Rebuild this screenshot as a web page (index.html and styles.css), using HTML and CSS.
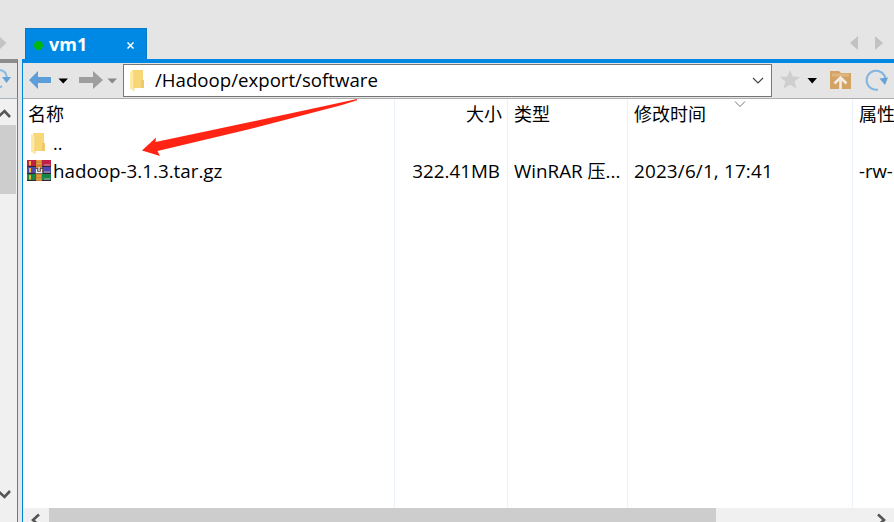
FILE: index.html
```html
<!DOCTYPE html>
<html lang="zh-CN">
<head>
<meta charset="utf-8">
<title>vm1</title>
<link rel="stylesheet" href="styles.css">
</head>
<body>
<svg width="0" height="0" class="defs">
  <symbol id="folder" viewBox="0 0 16 22">
    <path d="M3 0H14V18H5Z" fill="#f7d778"/>
    <path d="M12 10h3v8h-3z" fill="#eecb68"/>
    <path d="M1 1L5 3.5V21L1 18.5Z" fill="#ffe8a3"/>
    <path d="M5 3.5V21" stroke="#e9c766" stroke-width=".6"/>
  </symbol>
</svg>
<div class="app">
  <aside class="side">
    <div class="side-tabs"><svg width="8" height="12" viewBox="0 0 8 12"><path d="M0 0L6.500 6L0 12Z" fill="#c3c3c3"/></svg></div>
    <div class="side-tool"><svg width="12" height="24" viewBox="0 0 12 24"><path d="M0 4Q6.500 5 7 12M0 21.500L2 20" fill="none" stroke="#8ab9df" stroke-width="2"/><path d="M2 11H11L6.500 17Z" fill="#65a3d7"/></svg></div>
    <div class="side-scroll">
      <svg class="s-up" width="12" height="12" viewBox="0 0 12 12"><path d="M-2 9L4.500 3L10 9" fill="none" stroke="#555" stroke-width="2.600"/></svg>
      <div class="s-thumb"></div>
      <svg class="s-down" width="12" height="12" viewBox="0 0 12 12"><path d="M-2 2L4.500 8L10 2" fill="none" stroke="#555" stroke-width="2.600"/></svg>
    </div>
  </aside>
  <main class="main">
    <div class="tabs">
      <div class="tab"><i class="dot"></i><span class="tab-name">vm1</span>
        <svg width="7" height="7" viewBox="0 0 7 7"><path d="M.5.5L6.500 6.500M6.500.5L.5 6.500" stroke="#fff" stroke-width="1.500"/></svg></div>
      <svg class="nav" width="34" height="16" viewBox="0 0 34 16"><path d="M8 1V15L0 8ZM25 1V15L33 8Z" fill="#c2c2c2"/></svg>
    </div>
    <div class="panel">
      <div class="toolbar">
        <svg class="arrows" width="100" height="35" viewBox="0 0 100 35">
          <path d="M6 17L15 8V14H28V20H15V26Z" fill="#5c9ed7"/>
          <path d="M35.500 15.500H45L40.200 20.500Z" fill="#000"/>
          <path d="M80 17L70 8V14H56V20H70V26Z" fill="#9e9e9e"/>
          <path d="M84.500 15.500H94L89.200 20.500Z" fill="#888"/>
        </svg>
        <div class="address">
          <svg width="16" height="22"><use href="#folder"/></svg>
          <span class="path">/Hadoop/export/software</span>
          <svg class="chev" width="12" height="8" viewBox="0 0 12 8"><path d="M1 1L6 6L11 1" fill="none" stroke="#444" stroke-width="1.200"/></svg>
        </div>
        <svg class="tools" width="122" height="35" viewBox="0 0 122 35">
          <path d="M18 7L20.700 13.500L28 14L22.500 18.500L24.500 25.500L18 21.800L11.500 25.500L13.500 18.500L8 14L15.300 13.500Z" fill="#cecece"/>
          <path d="M35.500 15H45L40.200 20.500Z" fill="#000"/>
          <path d="M58 8H67L69 10H79V26H58Z" fill="#d3a366"/><path d="M60 12H77" stroke="#dfb57d" stroke-width="3"/>
          <path d="M68.500 26V16M62.500 20.500L68.500 14.500L74.500 20.500" fill="none" stroke="#f2ece4" stroke-width="2.600"/>
          <path d="M113.500 16A9.500 9.500 0 1 0 106 26.500" fill="none" stroke="#82b5df" stroke-width="2"/>
          <path d="M107.500 15.500L116 14.500L115 17L113 22Z" fill="#65a3d7"/>
        </svg>
      </div>
      <div class="table">
        <div class="col name"><div class="th">名称</div>
          <div class="td"><svg class="ico-f" width="16" height="22"><use href="#folder"/></svg><span>..</span></div>
          <div class="td file"><svg width="24" height="21" viewBox="0 0 24 21">
            <path d="M0 0H24V7H0Z" fill="#c01f48"/><path d="M0 7H24V14H0Z" fill="#4c48b0"/><path d="M0 14H24V21H0Z" fill="#16854a"/>
            <path d="M0 6.500H24M0 13.500H24M0 20.500H24" stroke="#332432" stroke-width="1"/>
            <path d="M17 5H23M17 12H23M17 19H23" stroke="#b9a9b6" stroke-width="1"/>
            <path d="M3 1V5.500M3 8V12.500M3 15V19.500" stroke="#f1b52e" stroke-width="2"/>
            <path d="M9 0H15V21H9Z" fill="#cc8430"/><path d="M10 1H14M10 3.500H14M10 16H14M10 19H14" stroke="#f0b34d" stroke-width="1.200"/>
            <path d="M8 8H16V14H8Z" fill="#5c4b42"/><path d="M9.500 9V12.500H14.500V9M12 7V11" fill="none" stroke="#eee" stroke-width="1.300"/></svg><span class="t-file">hadoop-3.1.3.tar.gz</span></div></div>
        <div class="col size"><div class="th">大小</div><div class="td"></div><div class="td"><span class="t-size">322.41MB</span></div></div>
        <div class="col type"><div class="th">类型</div><div class="td"></div><div class="td"><span class="t-type">WinRAR <span class="cjk">压</span>...</span></div></div>
        <div class="col date"><div class="th">修改时间<svg class="sort" width="12" height="7" viewBox="0 0 12 7"><path d="M1 .5L6 5.500L11 .5" fill="none" stroke="#777" stroke-width="1"/></svg></div><div class="td"></div><div class="td"><span class="t-date">2023/6/1, 17:41</span></div></div>
        <div class="col attr"><div class="th">属性</div><div class="td"></div><div class="td"><span class="t-attr">-rw-</span></div></div>
      </div>
      <div class="hscroll">
        <svg width="26" height="14" viewBox="0 0 26 14"><path d="M16 6.500L10 12L16 17.500" fill="none" stroke="#555" stroke-width="2.600"/></svg>
        <div class="h-thumb"></div>
        <svg class="h-right" width="20" height="14" viewBox="0 0 20 14"><path d="M4 6.500L10 12L4 17.500" fill="none" stroke="#555" stroke-width="2.600"/></svg>
      </div>
    </div>
  </main>
  <svg class="pointer" width="240" height="60" viewBox="0 0 240 60"><path d="M237 0V1.300L222 6L128 30.500L37.500 52L40 57L22 51.600L36 38.500L35.500 43Q150 19 237 0Z" fill="#ff2414"/></svg>
</div>
</body>
</html>
```
FILE: styles.css
```css
* { box-sizing: border-box; }
body { margin: 0; font: 18px/28px "Open Sans", "Noto Sans CJK SC", sans-serif; color: #000; }
svg { display: block; flex: none; }
.defs { position: absolute; }
.app { position: relative; display: flex; width: 894px; height: 522px; overflow: hidden; background: #e5e5e5; }
.side { width: 18px; margin-right: 4px; display: flex; flex-direction: column; }
.side-tabs { height: 59px; padding-top: 37px; }
.side-tool { height: 40px; padding-top: 3px; border-top: 4px solid #8c8c8c; border-right: 1px solid #777; border-bottom: 1px solid #a8b4bb; }
.side-scroll { flex: 1; display: flex; flex-direction: column; background: #f0f0f0; border-right: 1px solid #777; }
.s-up { margin-top: 9px; }
.s-thumb { margin-top: 5px; width: 16px; height: 69px; background: #cdcdcd; }
.s-down { margin-top: auto; margin-bottom: 21px; }
.main { flex: 1; min-width: 0; display: flex; flex-direction: column; }
.tabs { height: 59px; display: flex; align-items: flex-end; justify-content: space-between; padding: 0 10px 0 3px; }
.tab { width: 122px; height: 31px; display: flex; align-items: center; padding: 2px 12px 0 8px; background: #0089e4; border: 1px solid #0879c2; border-bottom: 0; }
.dot { width: 9px; height: 9px; border-radius: 50%; background: #00b80b; }
.tab-name { margin-left: 6px; margin-right: auto; margin-top: -2px; color: #fff; font-weight: 700; }
.nav { margin-bottom: 8px; }
.panel { flex: 1; display: flex; flex-direction: column; border-left: 1px solid #0084d6; border-top: 4px solid #0089e4; min-height: 0; }
.toolbar { height: 36px; display: flex; border-bottom: 1px solid #adadad; }
.address { width: 649px; height: 33px; margin-top: 1px; display: flex; align-items: center; padding: 0 7px 0 5px; background: #fff; border: 1px solid #777; }
.path { margin: -2px 0 0 10px; white-space: nowrap; font-size: 18.65px; }
.chev { margin-left: auto; }
.table { flex: 1; display: flex; background: #fff; min-height: 0; }
.col { flex: none; border-right: 1px solid #eaf1fb; overflow: hidden; white-space: nowrap; padding-left: 6px; }
.th { height: 30px; line-height: 31px; }
.td { height: 28px; display: flex; align-items: center; }
.td:last-child { height: 29px; padding-bottom: 2px; }
.name { width: 372px; }
.name .th { margin-left: -1px; }
.ico-f { margin: 2px 7px 0 1px; }
.file { margin-left: -2px; gap: 2px; }
.t-file, .t-size { font-size: 18.8px; }
.t-type { font-size: 18.8px; }
.cjk { font-size: 18px; }
.t-date { font-size: 18.9px; letter-spacing: .15px; }
.t-attr { font-size: 18.5px; }
.size { width: 113px; text-align: right; padding-right: 5px; }
.size .td { justify-content: flex-end; padding-right: 2px; }
.type { width: 120px; }
.date { width: 225px; }
.date .th { display: flex; }
.sort { margin: 2px 0 0 28px; }
.attr { width: 41px; border: 0; }
.hscroll { height: 14px; display: flex; background: #f0f0f0; }
.h-thumb { width: 667px; background: #cdcdcd; }
.h-right { margin-left: auto; }
.pointer { position: absolute; left: 120px; top: 99px; }
```
